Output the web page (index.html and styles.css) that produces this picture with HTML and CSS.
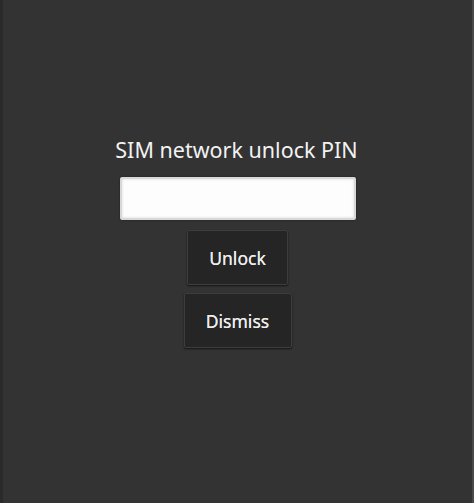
FILE: index.html
```html
<!DOCTYPE html>
<html lang="en">
<head>
  <meta charset="UTF-8">
  <meta name="viewport" content="width=device-width, initial-scale=1.0">
  <title>SIM network unlock PIN</title>
  <link rel="stylesheet" href="styles.css">
</head>
<body>
  <main class="screen">
    <h1 class="prompt">SIM network unlock PIN</h1>
    <input type="password" class="pin-field" inputmode="numeric">
    <button class="btn btn-unlock">Unlock</button>
    <button class="btn btn-dismiss">Dismiss</button>
  </main>
</body>
</html>
```

FILE: styles.css
```css
* { box-sizing: border-box; margin: 0; padding: 0; }
html, body { height: 100%; }
body {
  background: #333333;
  font-family: 'Noto Sans', 'Open Sans', sans-serif;
  color: #f2f2f2;
  overflow: hidden;
}

.screen {
  height: 100%;
  display: flex;
  flex-direction: column;
  align-items: center;
  padding-top: 135px;
  border-left: 3px solid #2a2a2a;
  border-right: 2px solid #4a4a4a;
}

.prompt {
  font-size: 21.5px;
  font-weight: 400;
  line-height: 30px;
  margin-bottom: 12px;
  padding-right: 2px;
}

.pin-field {
  width: 236px;
  height: 43px;
  background: #fdfdfd;
  border: 2px solid #d8d8d8;
  border-radius: 2px;
  box-shadow: inset 0 0 3px rgba(0,0,0,0.15), 0 0 2px rgba(0,0,0,0.5);
  outline: none;
  margin-bottom: 10px;
}

.btn {
  font-family: inherit;
  font-size: 17.5px;
  color: #ededed;
  background: #252525;
  border: 1px solid #3d3d3d;
  border-radius: 2px;
  box-shadow: 0 1px 2px rgba(0,0,0,0.6);
  height: 55px;
  text-shadow: 0 0 0.4px #ededed;
}
.btn-unlock { width: 101px; margin-bottom: 8px; }
.btn-dismiss { width: 108px; }
```
